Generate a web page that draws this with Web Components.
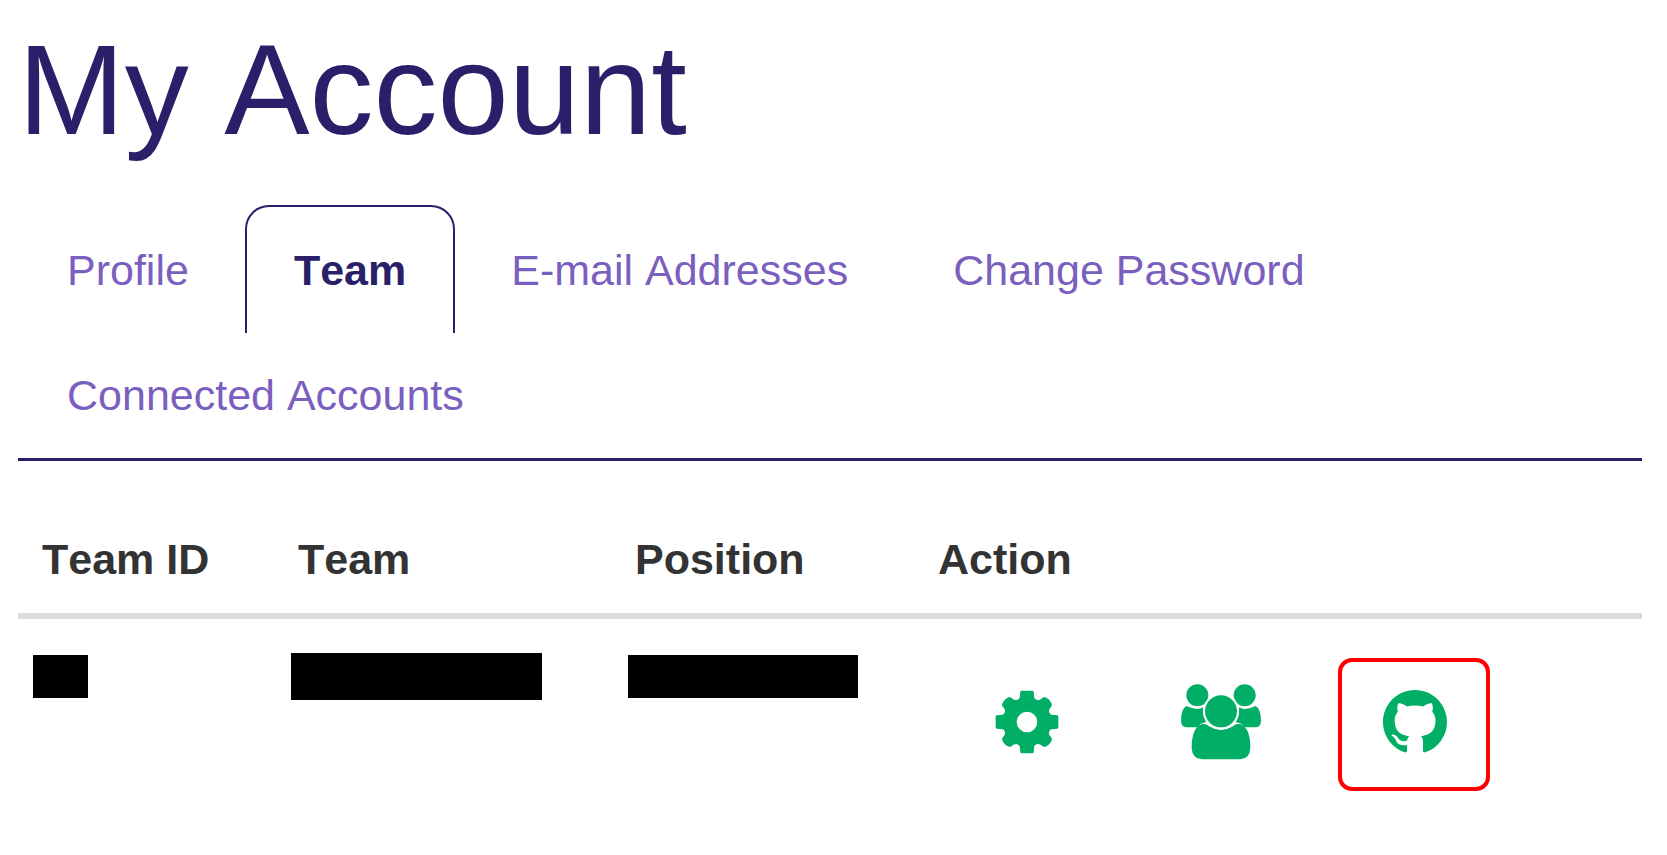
<!DOCTYPE html>
<html lang="en">
<head>
<meta charset="utf-8">
<meta name="viewport" content="width=device-width, initial-scale=1">
<title>My Account</title>
<style>
  body { margin: 0; background: #fff; color: #333; font-family: "Liberation Sans", Arial, sans-serif; font-size: 43px; line-height: 60px; font-kerning: none; }
</style>
</head>
<body>
<account-page heading="My Account">
  <account-tabs slot="tabs">
    <account-tab href="#profile">Profile</account-tab>
    <account-tab href="#team" active>Team</account-tab>
    <account-tab href="#email">E-mail Addresses</account-tab>
    <account-tab href="#password">Change Password</account-tab>
    <account-tab href="#connections">Connected Accounts</account-tab>
  </account-tabs>
  <team-table></team-table>
</account-page>

<script>
const define = (name, html, setup) => {
  const template = document.createElement('template');
  template.innerHTML = html;
  customElements.define(name, class extends HTMLElement {
    constructor() {
      super();
      this.attachShadow({ mode: 'open' }).append(template.content.cloneNode(true));
    }
    connectedCallback() { if (setup) setup(this, this.shadowRoot); }
  });
};

define('account-page', `
  <style>
    :host { display: block; padding: 20px 25px 45px 18px; --brand: #2a1f69; --link: #7b5fbf; --action: #00ae66; }
    h1 { margin: 0 0 45px; color: var(--brand); font-size: 128px; font-weight: 400; line-height: 140px; }
    main { margin-top: 44px; }
  </style>
  <h1></h1>
  <slot name="tabs"></slot>
  <main><slot></slot></main>`,
  (host, root) => { root.querySelector('h1').textContent = host.getAttribute('heading'); });

define('account-tabs', `
  <style>
    :host { display: block; }
    nav { display: flex; flex-wrap: wrap; column-gap: 7px; padding-bottom: 3px; border-bottom: 3px solid var(--brand); }
  </style>
  <nav aria-label="Account sections"><slot></slot></nav>`);

define('account-tab', `
  <style>
    :host { display: block; margin-bottom: -3px; }
    a { display: block; padding: 33px 47px; border: 2px solid transparent; border-bottom: 0; border-radius: 24px 24px 0 0; color: var(--link); text-decoration: none; white-space: nowrap; }
    :host([active]) a { border-color: var(--brand); color: var(--brand); font-weight: 700; }
  </style>
  <a><slot></slot></a>`,
  (host, root) => {
    const link = root.querySelector('a');
    link.href = host.getAttribute('href');
    if (host.hasAttribute('active')) link.setAttribute('aria-current', 'page');
  });

define('redacted-value', `
  <style>
    :host { display: flex; align-items: center; height: 47px; }
    span { width: var(--bar-width); height: var(--bar-height, 43px); background: #000; }
  </style>
  <span></span>`);

define('team-action', `
  <style>
    :host { display: block; flex: 0 0 152px; }
    a { display: flex; box-sizing: border-box; align-items: center; justify-content: center; height: 133px; padding: 0 0 5px 2px; border: 4px solid transparent; border-radius: 14px; color: var(--action); }
    :host([highlighted]) a { border-color: #f00; }
  </style>
  <a><slot></slot></a>`,
  (host, root) => {
    const link = root.querySelector('a');
    link.href = host.getAttribute('href');
    link.setAttribute('aria-label', host.getAttribute('label'));
  });

define('team-table', `
  <style>
    :host { display: block; }
    table { width: 100%; border-collapse: collapse; table-layout: fixed; }
    .c-id { width: 256px; } .c-team { width: 337px; } .c-position { width: 303px; }
    th { padding: 24px; border-bottom: 6px solid #ddd; text-align: left; font-weight: 700; white-space: nowrap; }
    td { padding: 34px 17px 0; vertical-align: top; }
    td.id { padding-left: 15px; --bar-width: 55px; }
    td.team { --bar-width: 251px; --bar-height: 47px; }
    td.position { --bar-width: 230px; }
    td.actions { padding: 39px 0 0 36px; }
    .row { display: flex; gap: 42px; }
    svg { display: block; fill: currentColor; }
  </style>
  <table>
    <colgroup><col class="c-id"><col class="c-team"><col class="c-position"><col></colgroup>
    <thead><tr><th scope="col">Team ID</th><th scope="col">Team</th><th scope="col">Position</th><th scope="col">Action</th></tr></thead>
    <tbody><tr>
      <td class="id"><redacted-value></redacted-value></td>
      <td class="team"><redacted-value></redacted-value></td>
      <td class="position"><redacted-value></redacted-value></td>
      <td class="actions"><div class="row">
        <team-action href="#settings" label="Team settings">
          <svg width="64" height="64" viewBox="-96 -96 192 192" aria-hidden="true">
            <defs>
              <path id="tooth" d="M-34 -50 L-38 -63 Q-23 -66 -22 -73 L-20 -91 Q-19 -94 -16 -94 H16 Q19 -94 20 -91 L22 -73 Q23 -66 38 -63 L34 -50Z"/>
              <path id="corner" d="M-34 -52 L-25 -68 Q-18 -74 -19 -82 Q-19 -88 -14 -91 Q0 -97 14 -91 Q19 -88 19 -82 Q18 -74 25 -68 L34 -52Z"/>
            </defs>
            <path fill-rule="evenodd" d="M0 -73A73 73 0 1 1 0 73A73 73 0 1 1 0 -73ZM0 -31A31 31 0 1 0 0 31A31 31 0 1 0 0 -31Z"/>
            <use href="#tooth"/><use href="#tooth" transform="rotate(90)"/><use href="#tooth" transform="rotate(180)"/><use href="#tooth" transform="rotate(270)"/>
            <use href="#corner" transform="rotate(45)"/><use href="#corner" transform="rotate(135)"/><use href="#corner" transform="rotate(225)"/><use href="#corner" transform="rotate(315)"/>
          </svg>
        </team-action>
        <team-action href="#members" label="Team members">
          <svg width="80" height="76" viewBox="48 47 240 228" aria-hidden="true">
            <circle cx="97" cy="81" r="33"/><circle cx="239" cy="81" r="33"/>
            <path d="M64 113 Q96 128 114 117 Q112 144 124 161 Q106 164 98 177 H63 Q48 175 48 157 Q48 122 64 113Z"/>
            <path d="M272 113 Q240 128 222 117 Q224 144 212 161 Q230 164 238 177 H273 Q288 175 288 157 Q288 122 272 113Z"/>
            <circle cx="168" cy="129" r="54" fill="#fff"/>
            <circle cx="168" cy="129" r="48"/>
            <path d="M112 167 Q124 165 132 174 Q168 196 204 174 Q212 165 224 167 Q256 176 256 239 Q254 272 226 273 H110 Q82 272 80 239 Q80 176 112 167Z"/>
          </svg>
        </team-action>
        <team-action href="#github" label="GitHub repository" highlighted>
          <svg width="64" height="64" viewBox="0 0 16 16" aria-hidden="true">
            <path d="M8 0C3.58 0 0 3.58 0 8c0 3.54 2.29 6.53 5.47 7.59.4.07.55-.17.55-.38 0-.19-.01-.82-.01-1.49-2.01.37-2.53-.49-2.69-.94-.09-.23-.48-.94-.82-1.13-.28-.15-.68-.52-.01-.53.63-.01 1.08.58 1.23.82.72 1.21 1.87.87 2.33.66.07-.52.28-.87.51-1.07-1.78-.2-3.64-.89-3.64-3.95 0-.87.31-1.59.82-2.15-.08-.2-.36-1.02.08-2.12 0 0 .67-.21 2.2.82.64-.18 1.32-.27 2-.27s1.36.09 2 .27c1.53-1.04 2.2-.82 2.2-.82.44 1.1.16 1.92.08 2.12.51.56.82 1.27.82 2.15 0 3.07-1.87 3.75-3.65 3.95.29.25.54.73.54 1.48 0 1.07-.01 1.93-.01 2.2 0 .21.15.46.55.38A8.01 8.01 0 0 0 16 8c0-4.42-3.58-8-8-8z"/>
          </svg>
        </team-action>
      </div></td>
    </tr></tbody>
  </table>`);
</script>
</body>
</html>
